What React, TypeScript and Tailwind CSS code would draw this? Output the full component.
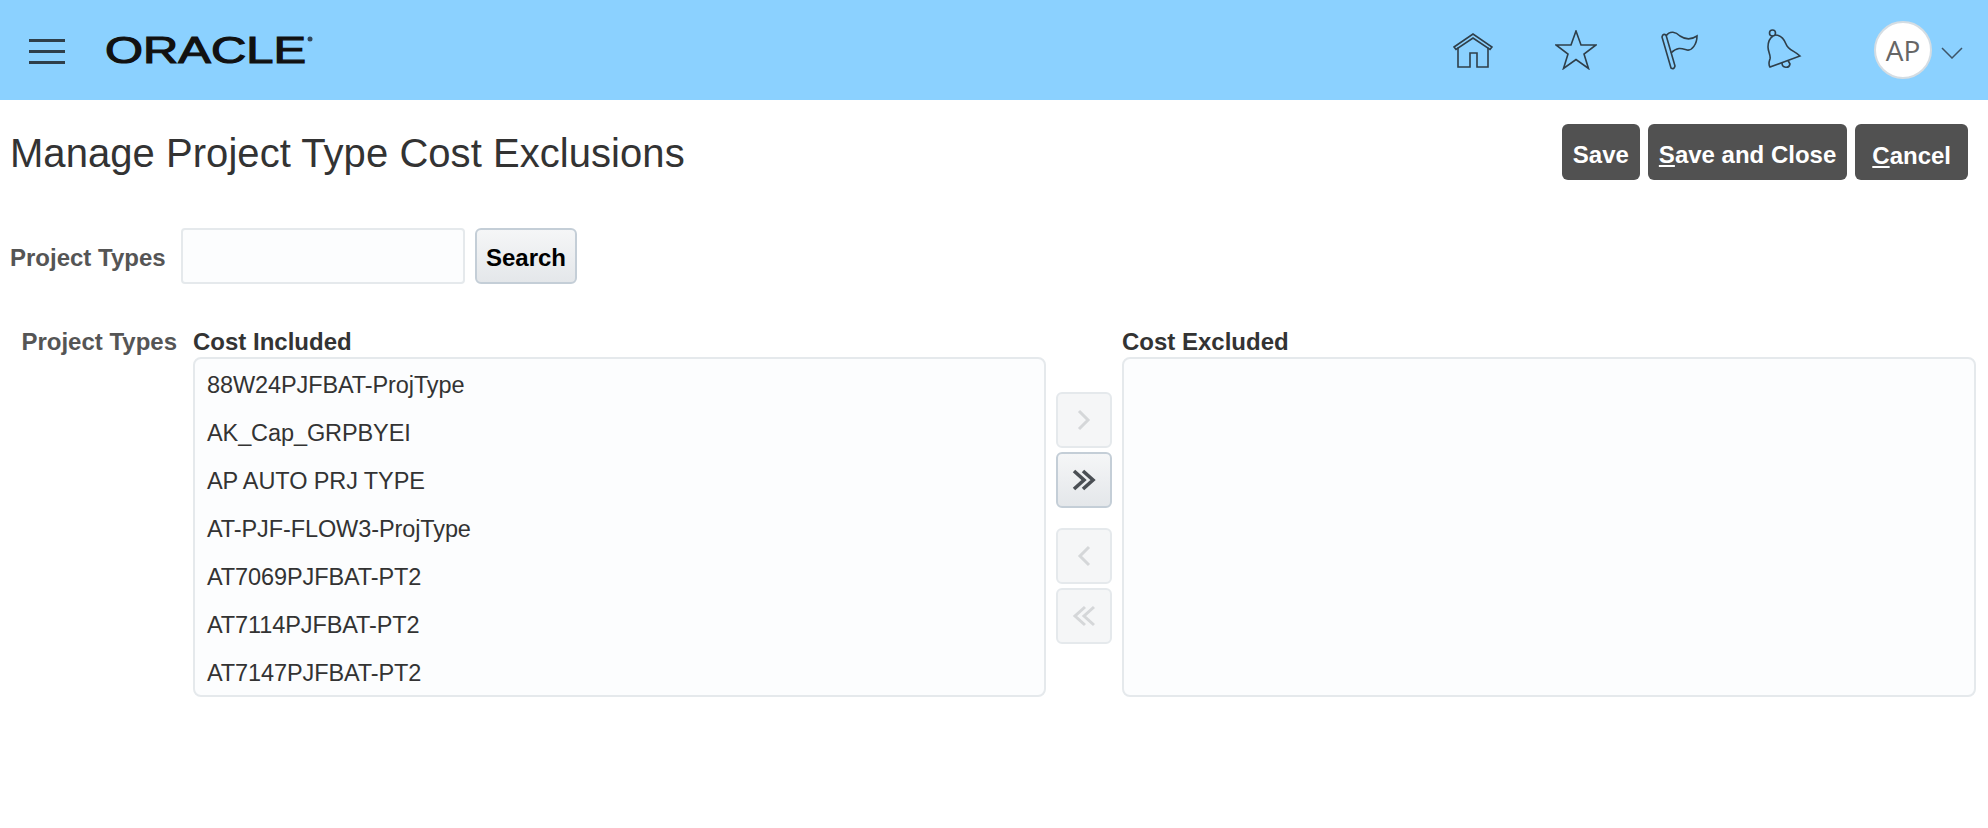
import React from "react";

const projectTypes = [
  "88W24PJFBAT-ProjType",
  "AK_Cap_GRPBYEI",
  "AP AUTO PRJ TYPE",
  "AT-PJF-FLOW3-ProjType",
  "AT7069PJFBAT-PT2",
  "AT7114PJFBAT-PT2",
  "AT7147PJFBAT-PT2",
];

const OracleLogo = () => (
  <svg width="210" height="32" viewBox="0 0 210 32" className="ml-[40px] overflow-visible">
    <text
      x="0"
      y="29"
      textLength="201"
      lengthAdjust="spacingAndGlyphs"
      fontFamily="Liberation Sans, Arial, sans-serif"
      fontWeight="400"
      fontSize="36"
      fill="#111"
      stroke="#111"
      strokeWidth="1.1"
    >
      ORACLE
    </text>
    <circle cx="205" cy="5" r="2.5" fill="#33475b" />
  </svg>
);

const HomeIcon = () => (
  <svg width="40" height="36" viewBox="0 0 40 36" fill="none" stroke="#2f3f4a" strokeWidth="1.6">
    <path d="M1 15 L20 2 L39 15 L37 17.5 L20 6 L3 17.5 Z" />
    <path d="M5 15.5 V35 H17 V21 H24 V35 H35 V15.5" />
  </svg>
);

const StarIcon = () => (
  <svg width="42" height="40" viewBox="0 0 42 40" fill="none" stroke="#2f3f4a" strokeWidth="1.6">
    <path d="M21 1 L26 15 L41 15 L29 24 L33.5 38.5 L21 29.5 L8.5 38.5 L13 24 L1 15 L16 15 Z" />
  </svg>
);

const FlagIcon = () => (
  <svg width="38" height="40" viewBox="0 0 38 40" fill="none" stroke="#2f3f4a" strokeWidth="1.6">
    <path d="M1 7 Q2 3 5 5 L14 36 Q13 40 10 38 Z" />
    <path d="M5 6 C9 0 15 2 19 6 C25 10 30 10 36 6 C36 14 31 21 26 20 C22 19 17 16 10 23" />
  </svg>
);

const BellIcon = () => (
  <svg width="36" height="40" viewBox="0 0 36 40" fill="none" stroke="#2f3f4a" strokeWidth="1.6">
    <circle cx="5.5" cy="4" r="3" />
    <path d="M8 6 C14 6 17 10 19 15 C21 21 28 22 33 27 L3 38 C1 35 2 33 3 30 C4 26 1 23 1 18 C1 13 3 9 6 7" />
    <path d="M15 34 C15 39 22 40 23 35 L21 31.5" />
  </svg>
);

const ChevronIcon = ({ d, color, width = 3 }: { d: string; color: string; width?: number }) => (
  <svg width="26" height="24" viewBox="0 0 26 24" fill="none" stroke={color} strokeWidth={width}>
    <path d={d} />
  </svg>
);

const ShuttleButton = ({ d, enabled }: { d: string; enabled?: boolean }) => (
  <button
    className={
      enabled
        ? "w-[56px] h-[56px] flex items-center justify-center rounded-[6px] border-2 border-[#c4ced7] bg-gradient-to-b from-[#f5f6f7] to-[#e4e7ea]"
        : "w-[56px] h-[56px] flex items-center justify-center rounded-[6px] border-2 border-[#e5e9ec] bg-[#f5f6f7]"
    }
  >
    <ChevronIcon d={d} color={enabled ? "#4a4f54" : "#d5d7d9"} width={enabled ? 3.6 : 3} />
  </button>
);

const DarkButton = ({ className, children }: { className: string; children: React.ReactNode }) => (
  <button className={`h-[56px] rounded-[6px] bg-[#515151] text-white text-[24px] font-bold ${className}`}>
    {children}
  </button>
);

const App = () => {
  return (
    <div className="w-[1988px] h-[828px] bg-white overflow-hidden font-['Liberation_Sans',Arial,sans-serif] text-[#333]">
      <header className="h-[100px] bg-[#8bd1ff] flex items-center pl-[29px] pr-[25px]">
        <div className="w-[36px] flex flex-col gap-[8px] mt-[2px]">
          <div className="h-[3px] bg-[#2f3f4a]" />
          <div className="h-[3px] bg-[#2f3f4a]" />
          <div className="h-[3px] bg-[#2f3f4a]" />
        </div>
        <OracleLogo />
        <div className="ml-auto flex items-center">
          <HomeIcon />
          <div className="ml-[62px]"><StarIcon /></div>
          <div className="ml-[64px]"><FlagIcon /></div>
          <div className="ml-[68px] -mt-[2px]"><BellIcon /></div>
          <div className="ml-[71px] w-[58px] h-[58px] rounded-full bg-white border-2 border-[#d5dde3] flex items-center justify-center text-[28px] text-[#666] font-['Open_Sans',sans-serif]">
            AP
          </div>
          <svg width="22" height="12" viewBox="0 0 22 12" fill="none" stroke="#3d5568" strokeWidth="1.5" className="ml-[9px] mt-[6px]">
            <path d="M1 1 L11 11 L21 1" />
          </svg>
        </div>
      </header>

      <div className="flex items-start justify-between pl-[10px] pr-[20px] pt-[24px]">
        <h1 className="text-[40px] leading-[56px] pt-[1px] tracking-[0.05px]">Manage Project Type Cost Exclusions</h1>
        <div className="flex gap-[8px]">
          <DarkButton className="px-[11px] pt-[5px]">Save</DarkButton>
          <DarkButton className="px-[11px] pt-[5px]"><u>S</u>ave and Close</DarkButton>
          <DarkButton className="px-[17px] pt-[7px]"><u>C</u>ancel</DarkButton>
        </div>
      </div>

      <div className="flex items-center mt-[47px] pl-[10px]">
        <label className="text-[24px] font-bold text-[#555] w-[171px] pt-[4px]">Project Types</label>
        <input className="w-[284px] h-[56px] bg-[#fcfdfe] border-2 border-[#e5e9ec] rounded-[4px]" />
        <button className="ml-[10px] w-[102px] h-[56px] pt-[3px] rounded-[6px] border-2 border-[#c4ced7] bg-gradient-to-b from-[#f5f6f7] to-[#e4e7ea] text-[24px] font-bold text-black">
          Search
        </button>
      </div>

      <div className="flex mt-[45px] pl-[10px]">
        <div className="w-[167px] text-right text-[24px] leading-[26px] font-bold text-[#555]">Project Types</div>
        <div className="ml-[16px] w-[853px]">
          <div className="text-[24px] leading-[26px] pb-[2px] font-bold">Cost Included</div>
          <div className="h-[340px] bg-[#fcfdfe] border-2 border-[#e5e9ec] rounded-[8px] pl-[12px] pt-[2px] overflow-hidden">
            {projectTypes.map((name) => (
              <div key={name} className="h-[48px] flex items-center text-[23.5px] leading-[28px] tracking-[-0.1px]">
                {name}
              </div>
            ))}
          </div>
        </div>
        <div className="ml-[10px] w-[56px] pt-[63px] flex flex-col">
          <ShuttleButton d="M8 3 L17 12 L8 21" />
          <div className="mt-[4px]">
            <ShuttleButton enabled d="M3 3 L13 12 L3 21 M12 3 L22 12 L12 21" />
          </div>
          <div className="mt-[20px]">
            <ShuttleButton d="M18 3 L9 12 L18 21" />
          </div>
          <div className="mt-[4px]">
            <ShuttleButton d="M14 3 L4 12 L14 21 M23 3 L13 12 L23 21" />
          </div>
        </div>
        <div className="ml-[10px] w-[854px]">
          <div className="text-[24px] leading-[26px] pb-[2px] font-bold">Cost Excluded</div>
          <div className="h-[340px] bg-[#fcfdfe] border-2 border-[#e5e9ec] rounded-[8px]" />
        </div>
      </div>
    </div>
  );
};

export default App;
